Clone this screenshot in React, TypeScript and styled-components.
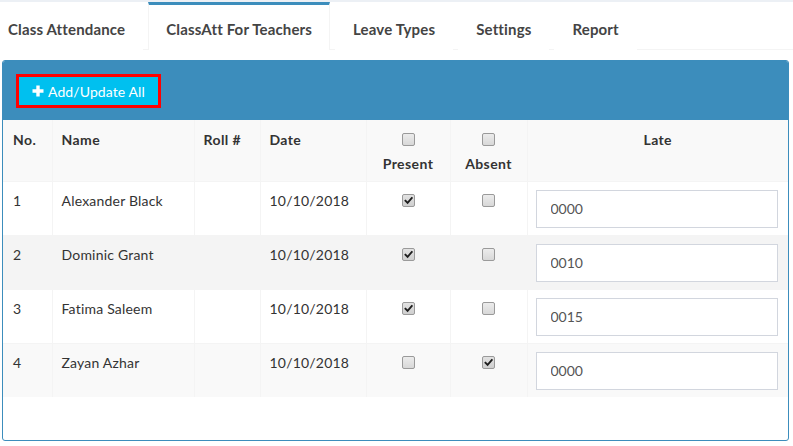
import styled, { createGlobalStyle } from 'styled-components';

const GlobalStyle = createGlobalStyle`
  html, body {
    margin: 0;
    padding: 0;
    background: #fff;
  }
  body {
    font-family: Lato, "Open Sans", sans-serif;
    font-size: 14px;
    color: #333;
  }
`;

const tabs = ['Class Attendance', 'ClassAtt For Teachers', 'Leave Types', 'Settings', 'Report'];

const rows = [
  { no: 1, name: 'Alexander Black', date: '10/10/2018', present: true, absent: false, late: '0000', bg: '#fff' },
  { no: 2, name: 'Dominic Grant', date: '10/10/2018', present: true, absent: false, late: '0010', bg: '#f4f4f4' },
  { no: 3, name: 'Fatima Saleem', date: '10/10/2018', present: true, absent: false, late: '0015', bg: '#fff' },
  { no: 4, name: 'Zayan Azhar', date: '10/10/2018', present: false, absent: true, late: '0000', bg: '#f9f9f9' },
];

const App = () => {
  return (
    <Page>
      <GlobalStyle />
      <TopStrip />
      <TabList>
        {tabs.map((t, i) => (
          <Tab key={t} active={i === 1}>{t}</Tab>
        ))}
      </TabList>

      <Panel>
        <PanelHeader>
          <AddButton>
            <PlusIcon viewBox="0 0 12 12">
              <path d="M4.3 0.5h3.4v3.8h3.8v3.4H7.7v3.8H4.3V7.7H0.5V4.3h3.8z" fill="#fff" />
            </PlusIcon>
            Add/Update All
          </AddButton>
        </PanelHeader>

        <Table>
          <colgroup>
            <col style={{ width: 49 }} />
            <col style={{ width: 142 }} />
            <col style={{ width: 66 }} />
            <col style={{ width: 106 }} />
            <col style={{ width: 84 }} />
            <col style={{ width: 77 }} />
            <col />
          </colgroup>
          <thead>
            <HeadRow>
              <Th>No.</Th>
              <Th>Name</Th>
              <Th>Roll #</Th>
              <Th>Date</Th>
              <Th center>
                <BoxLine><Check /></BoxLine>
                Present
              </Th>
              <Th center>
                <BoxLine><Check /></BoxLine>
                Absent
              </Th>
              <Th center>Late</Th>
            </HeadRow>
          </thead>
          <tbody>
            {rows.map((r) => (
              <Row key={r.no} bg={r.bg}>
                <Td>{r.no}</Td>
                <Td>{r.name}</Td>
                <Td></Td>
                <Td>{r.date}</Td>
                <Td center><Check checked={r.present} /></Td>
                <Td center><Check checked={r.absent} /></Td>
                <InputCell>
                  <LateInput defaultValue={r.late} />
                </InputCell>
              </Row>
            ))}
          </tbody>
        </Table>
        <PanelFoot />
      </Panel>
    </Page>
  );
};

const Check = ({ checked }: { checked?: boolean }) => (
  <CheckBox checked={checked}>
    {checked && (
      <CheckMark viewBox="0 0 10 10">
        <path d="M1.6 5.2L4 7.6 8.6 2.2" fill="none" stroke="#1e1e1e" strokeWidth="2" strokeLinecap="square" />
      </CheckMark>
    )}
  </CheckBox>
);

const Page = styled.div`
  width: 793px;
  height: 446px;
  overflow: hidden;
`;

const TopStrip = styled.div`
  height: 2px;
  background: #ecf0f5;
`;

const TabList = styled.div`
  display: flex;
  height: 47px;
  border-bottom: 1px solid #f4f4f4;
`;

const Tab = styled.div<{ active?: boolean }>`
  display: flex;
  align-items: center;
  padding: 2px 17px 0;
  margin-right: 5px;
  font-weight: 700;
  font-size: 15px;
  letter-spacing: 0.15px;
  color: #444;
  white-space: nowrap;
  box-sizing: border-box;
  border-top: 3px solid ${(p) => (p.active ? '#3c8dbc' : 'transparent')};
  border-left: 1px solid ${(p) => (p.active ? '#f4f4f4' : 'transparent')};
  border-right: 1px solid ${(p) => (p.active ? '#f4f4f4' : 'transparent')};
  background: #fff;
  margin-bottom: -1px;

  &:first-child {
    padding-left: 8px;
    border-left: none;
  }
`;

const Panel = styled.div`
  margin: 10px 4px 0 2px;
  border: 1px solid #3c8dbc;
  border-radius: 3px;
  overflow: hidden;
`;

const PanelHeader = styled.div`
  background: #3c8dbc;
  padding: 13px 13px 12px;
`;

const AddButton = styled.button`
  display: inline-flex;
  align-items: center;
  gap: 4px;
  height: 34px;
  padding: 0 13px 0 13px;
  background: #00c0ef;
  border: 3px solid #ff0000;
  color: #fff;
  font-family: Lato, "Open Sans", sans-serif;
  font-size: 14px;
  letter-spacing: 0.1px;
  cursor: pointer;
  box-sizing: border-box;
`;

const PlusIcon = styled.svg`
  width: 12px;
  height: 12px;
`;

const Table = styled.table`
  width: 100%;
  border-collapse: collapse;
  table-layout: fixed;
`;

const HeadRow = styled.tr`
  background: #f9f9f9;
`;

const Th = styled.th<{ center?: boolean }>`
  text-align: ${(p) => (p.center ? 'center' : 'left')};
  vertical-align: top;
  padding: 10px 9px 6px;
  height: 45px;
  line-height: 20px;
  font-weight: 700;
  letter-spacing: 0.4px;
  color: #333;
  border-left: 1px solid #f4f4f4;
  &:first-child {
    border-left: none;
    padding-left: 10px;
  }
`;

const BoxLine = styled.div`
  height: 24px;
  display: flex;
  justify-content: center;
  align-items: flex-start;
`;

const Row = styled.tr<{ bg: string }>`
  background: ${(p) => p.bg};
  border-top: 1px solid #f4f4f4;
`;

const Td = styled.td<{ center?: boolean }>`
  text-align: ${(p) => (p.center ? 'center' : 'left')};
  vertical-align: top;
  padding: 9px 9px 7px;
  height: 37px;
  line-height: 20px;
  color: #333;
  letter-spacing: 0.2px;
  border-left: 1px solid #f4f4f4;
  &:first-child {
    border-left: none;
    padding-left: 10px;
  }
`;

const InputCell = styled.td`
  padding: 7px 10px 7px 8px;
  border-left: 1px solid #f4f4f4;
`;

const LateInput = styled.input`
  width: 100%;
  height: 38px;
  box-sizing: border-box;
  border: 1px solid #d2d6de;
  padding: 0 14px;
  font-family: Lato, "Open Sans", sans-serif;
  font-size: 14px;
  color: #555;
  background: #fff;
  outline: none;
`;

const CheckBox = styled.span<{ checked?: boolean }>`
  display: inline-flex;
  align-items: center;
  justify-content: center;
  width: 13px;
  height: 13px;
  margin-top: 3px;
  box-sizing: border-box;
  border: 1px solid #9a9a9a;
  border-radius: 2px;
  background: ${(p) => (p.checked ? 'linear-gradient(#e2e2e2, #cfcfcf)' : 'linear-gradient(#ececec, #d8d8d8)')};
  vertical-align: top;
`;

const CheckMark = styled.svg`
  width: 9px;
  height: 9px;
`;

const PanelFoot = styled.div`
  height: 43px;
`;

export default App;
